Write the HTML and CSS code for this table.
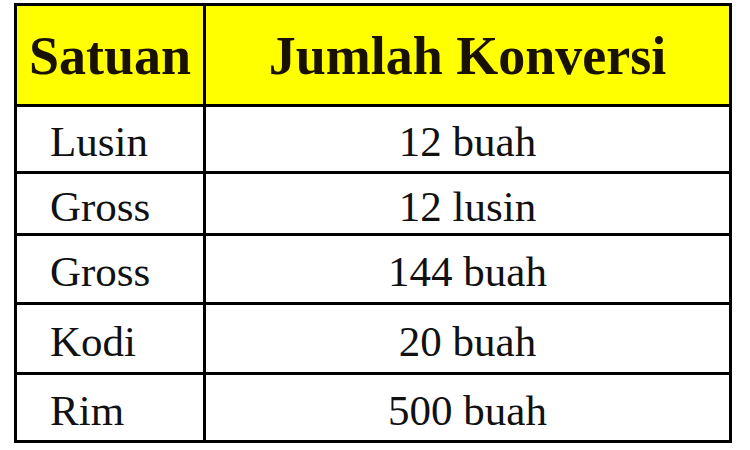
FILE: index.html
```html
<!DOCTYPE html>
<html lang="id">
<head>
<meta charset="utf-8">
<title>Satuan dan Jumlah Konversi</title>
<link rel="stylesheet" href="styles.css">
</head>
<body>
<table class="conv">
  <thead>
    <tr class="head">
      <th class="c1">Satuan</th>
      <th class="c2">Jumlah Konversi</th>
    </tr>
  </thead>
  <tbody>
    <tr class="r1"><td class="c1">Lusin</td><td class="c2">12 buah</td></tr>
    <tr class="r2"><td class="c1">Gross</td><td class="c2">12 lusin</td></tr>
    <tr class="r3"><td class="c1">Gross</td><td class="c2">144 buah</td></tr>
    <tr class="r4"><td class="c1">Kodi</td><td class="c2">20 buah</td></tr>
    <tr class="r5"><td class="c1">Rim</td><td class="c2">500 buah</td></tr>
  </tbody>
</table>
</body>
</html>
```
FILE: styles.css
```css
html, body {
  margin: 0;
  padding: 0;
  background: #ffffff;
}

body {
  font-family: "Liberation Serif", Tinos, "Nimbus Roman", "DejaVu Serif", serif;
  color: #000;
}

.conv {
  margin: 3px 0 0 14px;
  width: 718px;
  border: 3px solid #000;
  border-spacing: 0;
  table-layout: fixed;
}

.conv th,
.conv td {
  box-sizing: border-box;
  padding: 0;
  border-bottom: 3px solid #000;
  vertical-align: middle;
  white-space: nowrap;
  font-family: "Liberation Serif", Tinos, "Nimbus Roman", "DejaVu Serif", serif;
}

.conv tr:last-child td {
  border-bottom: none;
}

.conv .c1 {
  width: 189px;
  border-right: 3px solid #000;
}

.head th {
  height: 101px;
  background: #ffff00;
  color: #1a1200;
  font-weight: bold;
  font-size: 54px;
  text-align: center;
  padding-top: 2px;
}

.conv td {
  font-size: 43px;
  padding-top: 5px;
  color: #111;
}

.conv td.c1 {
  text-align: left;
  padding-left: 33px;
}

.conv td.c2 {
  text-align: center;
}

.r1 td { height: 67px; }
.r2 td { height: 62px; }
.r3 td { height: 69px; }
.r4 td { height: 70px; }
.r5 td { height: 65px; }
```
